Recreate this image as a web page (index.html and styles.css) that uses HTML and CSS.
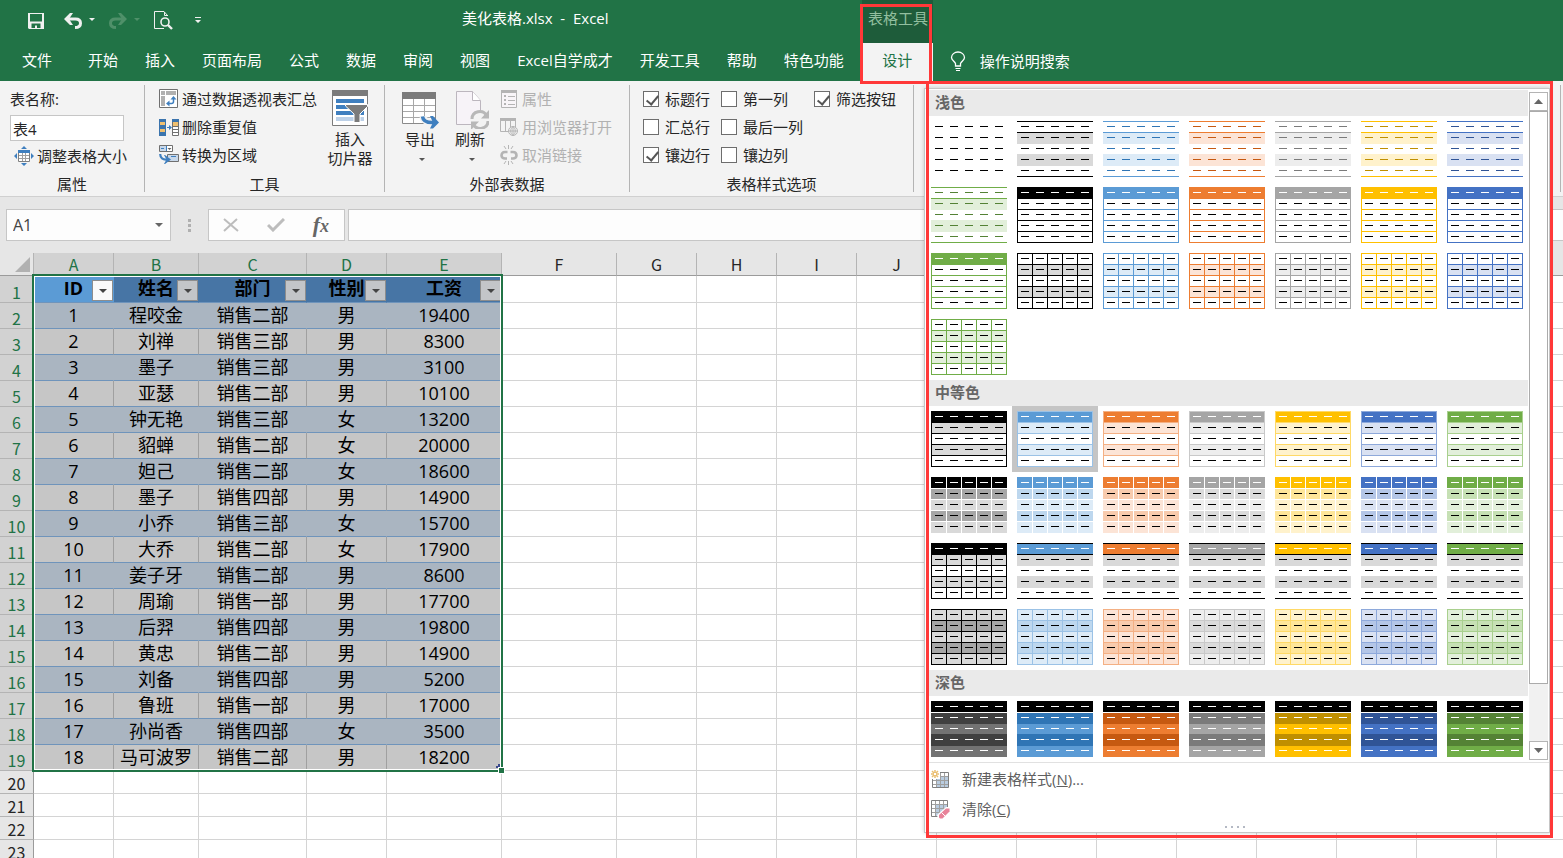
FILE: index.html
```html
<!DOCTYPE html>
<html lang="zh-CN">
<head>
    <meta charset="UTF-8">
    <meta name="viewport" content="width=device-width, initial-scale=1.0">
    <title>美化表格.xlsx - Excel</title>
    <link rel="stylesheet" href="styles.css">
</head>
<body>
    <header class="title-bar">
        <div class="quick-access">
            <button class="qa-btn" aria-label="保存">
                <svg width="16" height="16" viewBox="0 0 16 16"><path fill="#f0f0f0" fill-rule="evenodd" d="M0 0h16v16H1l-1-1zM2 1v7.500h12V1zM3.500 10.500V15H7v-2.500h2V15h3.500v-4.500z"/></svg>
            </button>
            <button class="qa-btn qa-undo" aria-label="撤消">
                <svg width="18" height="16" viewBox="0 0 18 16"><path fill="none" stroke="#f0f0f0" stroke-width="3" d="M3 6h8.500c3 0 5 1.500 5 4.200S14.500 14.500 11 14.500"/><path fill="#f0f0f0" d="M0 6L6 0h3L5 6l4 6H6z"/></svg>
                <svg class="caret" width="6" height="4" viewBox="0 0 6 4"><path fill="#f0f0f0" d="M0 0h6L3 3z"/></svg>
            </button>
            <button class="qa-btn qa-redo" aria-label="恢复" disabled>
                <svg width="18" height="16" viewBox="0 0 18 16"><path fill="none" stroke="#4f9069" stroke-width="3" d="M15 6H6.500c-3 0-5 1.500-5 4.200S3.500 14.500 7 14.500"/><path fill="#4f9069" d="M18 6l-6-6H9l4 6-4 6h3z"/></svg>
                <svg class="caret" width="6" height="4" viewBox="0 0 6 4"><path fill="#4f9069" d="M0 0h6L3 3z"/></svg>
            </button>
            <button class="qa-btn qa-preview" aria-label="打印预览">
                <svg width="19" height="19" viewBox="0 0 19 19"><path fill="none" stroke="#f0f0f0" d="M13.500 5V4.500L10 .500H.500v17H10M10.500 1v3.500H14"/><circle cx="11" cy="11" r="4" fill="none" stroke="#f0f0f0" stroke-width="1.600"/><path stroke="#f0f0f0" stroke-width="2.400" d="M14 14l4 4"/></svg>
            </button>
            <button class="qa-btn" aria-label="自定义快速访问工具栏">
                <svg width="6" height="7" viewBox="0 0 6 7"><path fill="#f0f0f0" d="M0 0h6v1H0zM0 3h6L3 6z"/></svg>
            </button>
        </div>
        <div class="doc-title">美化表格.xlsx&nbsp; - &nbsp;Excel</div>
        <div class="context-title">表格工具</div>
    </header>

    <nav class="tabs">
        <a class="tab tab-file" href="#">文件</a>
        <a class="tab" href="#">开始</a>
        <a class="tab" href="#">插入</a>
        <a class="tab" href="#">页面布局</a>
        <a class="tab" href="#">公式</a>
        <a class="tab" href="#">数据</a>
        <a class="tab" href="#">审阅</a>
        <a class="tab" href="#">视图</a>
        <a class="tab" href="#">Excel自学成才</a>
        <a class="tab" href="#">开发工具</a>
        <a class="tab" href="#">帮助</a>
        <a class="tab" href="#">特色功能</a>
        <a class="tab tab-active" href="#">设计</a>
        <a class="tell-me" href="#">
            <svg width="16" height="21" viewBox="0 0 16 21"><path fill="none" stroke="#fff" stroke-width="1.300" d="M5.500 15v-2.500C4.500 10.500 1.500 9 1.500 6.500 1.500 3.500 4.500 1 8 1s6.500 2.500 6.500 5.500c0 2.500-3 4-4 6V15z"/><path stroke="#fff" stroke-width="1.200" d="M5.500 17.500h5M6 19.500h4"/></svg>
            操作说明搜索
        </a>
    </nav>

    <section class="ribbon">
        <div class="group group-props">
            <div class="group-body">
                <label class="field-label" for="tableName">表名称:</label>
                <input class="name-input" id="tableName" type="text" value="表4">
                <button class="cmd cmd-resize">
                    <svg width="20" height="20" viewBox="0 0 20 20"><path fill="#3f7fbf" d="M10 0l3 3H7zM10 20l-3-3h6zM0 10l3-3v6zM20 10l-3 3V7z"/><path fill="#fff" stroke="#808080" d="M4.500 4.500h11v11h-11z"/><path fill="#3f7fbf" d="M4 4h12v3H4z"/><path stroke="#a0a0a0" d="M5 9.500h10M5 12.500h10M8.500 7v8M11.500 7v8"/></svg>
                    调整表格大小
                </button>
            </div>
            <div class="group-label">属性</div>
        </div>

        <div class="group group-tools">
            <div class="group-body row">
                <div class="cmd-list">
                    <button class="cmd">
                        <svg width="20" height="20" viewBox="0 0 20 20"><path fill="#fff" stroke="#707070" d="M.500.500h18v18H.500z"/><path fill="#b0b0b0" d="M2 2h4v4H2zM7 2h10v4H7zM2 7h4v10H2z"/><path fill="none" stroke="#3f7fbf" stroke-width="1.500" d="M9 14.500h3.500c1.500 0 2-1 2-2V9"/><path fill="#3f7fbf" d="M7 14.500l3.500-3v6zM14.500 7l3 3.500h-6z"/></svg>
                        通过数据透视表汇总
                    </button>
                    <button class="cmd">
                        <svg width="20" height="18" viewBox="0 0 20 18"><path fill="#3b74ad" d="M0 1h7v17H0z"/><path fill="#f0c070" d="M1 4h5v3H1zM1 11h5v3H1z"/><path fill="#3f7fbf" d="M8 9h2V7l3 2.500L10 12v-2H8z"/><path fill="#fff" stroke="#707070" d="M13.500 1.500h6v16h-6z"/><path fill="#3b74ad" d="M13 1h7v3h-7z"/><path fill="#f0c070" d="M14 4h5v4h-5z"/><path stroke="#707070" d="M14 8.500h5M14 11.500h5M14 14.500h5"/></svg>
                        删除重复值
                    </button>
                    <button class="cmd">
                        <svg width="20" height="20" viewBox="0 0 20 20"><path fill="#fff" stroke="#707070" d="M.500.500h13v6H.500z"/><path fill="#c8d8ea" d="M1 1h6v5H1z"/><path stroke="#3f7fbf" d="M2 3.500h3M7.500 1v5"/><path fill="#606060" d="M8.500 3h4l-2 2z"/><path fill="#c8d8ea" stroke="#707070" d="M8.500 9.500h11v7h-11z"/><path stroke="#3f7fbf" d="M12 11.500h5"/><path fill="none" stroke="#3f7fbf" stroke-width="2.200" d="M1.200 9c0 4 2.500 6 7 5.500"/><path fill="#3f7fbf" d="M6 10l6 4.500L6 19h-1l2.500-4.500L5 10z"/></svg>
                        转换为区域
                    </button>
                </div>
                <button class="big-btn slicer-btn">
                    <svg width="36" height="36" viewBox="0 0 36 36"><path fill="#fff" stroke="#7b7b7b" d="M.500.500h35v35H.500z"/><path fill="#7b7b7b" d="M0 0h36v6H0z"/><path fill="#3f7fbf" d="M4 9h28v4H4zM4 15h28v4H4zM4 21h28v4H4z"/><path fill="#bdd1e8" d="M4 27h28v4H4z"/><path fill="#7b7b7b" stroke="#fff" d="M13.500 14.500h22v2l-7.500 7.500v8.500h-6V24l-8.500-8z"/></svg>
                    <span>插入</span>
                    <span>切片器</span>
                </button>
            </div>
            <div class="group-label">工具</div>
        </div>

        <div class="group group-external">
            <div class="group-body row">
                <button class="big-btn">
                    <svg width="38" height="38" viewBox="0 0 38 38"><path fill="#fff" stroke="#8a8a8a" d="M1.500 1.500h33v31h-33z"/><path fill="#7b7b7b" d="M1 1h34v7H1z"/><path stroke="#a8a8a8" d="M2 14.500h32M2 20.500h32M2 26.500h32M12.500 8v24M23.500 8v24"/><path fill="none" stroke="#f3f3f3" stroke-width="7" d="M22 25c0 4 4 7 12 6.500"/><path fill="none" stroke="#3f7fbf" stroke-width="3.500" d="M21.500 25.500c.500 4.500 5 6.500 12 6"/><path fill="#3f7fbf" d="M29 25h3l6 6.500-6 6h-3l3-6z"/></svg>
                    <span>导出</span>
                    <svg class="big-caret" width="6" height="4" viewBox="0 0 6 4"><path fill="#555" d="M0 0h6L3 3z"/></svg>
                </button>
                <button class="big-btn refresh-btn">
                    <svg width="38" height="38" viewBox="0 0 38 38"><path fill="#f7f3f8" stroke="#bcb6be" d="M5.500.500h16l8 9v24h-24z"/><path fill="#fff" stroke="#bcb6be" d="M21.500.500v9h8"/><circle cx="29" cy="29" r="10" fill="#f3f3f3"/><path fill="none" stroke="#b8b8b8" stroke-width="3" d="M21 28c0-8 11-10 14.500-3.500M37 30c0 8-11 10-14.500 3.500"/><path fill="#b8b8b8" d="M38 19v8.500h-8zM20 39v-8.500h8z"/></svg>
                    <span>刷新</span>
                    <svg class="big-caret" width="6" height="4" viewBox="0 0 6 4"><path fill="#555" d="M0 0h6L3 3z"/></svg>
                </button>
                <div class="cmd-list cmd-list-off">
                    <button class="cmd" disabled>
                        <svg width="18" height="18" viewBox="0 0 18 18"><path fill="#f8f5f8" stroke="#b4b4b4" d="M1.500.500h15v17h-15z"/><path fill="#b4b4b4" d="M1 0h16v3H1zM4 5h2v2H4zM4 9h2v2H4zM4 13h2v2H4zM8 6h7v1H8zM8 10h7v1H8zM8 14h7v1H8z"/></svg>
                        属性
                    </button>
                    <button class="cmd" disabled>
                        <svg width="18" height="18" viewBox="0 0 18 18"><path fill="none" stroke="#b4b4b4" d="M9 13.500H.500V.500h15V9M5.500 3v10M10.500 3v6"/><path fill="#b4b4b4" d="M0 0h16v3H0z"/><circle cx="13" cy="13" r="4.500" fill="#f3f3f3" stroke="#b4b4b4"/><path fill="none" stroke="#b4b4b4" d="M8.500 13h9M13 8.500v9M13 8.500c-3 2-3 7 0 9c3-2 3-7 0-9"/></svg>
                        用浏览器打开
                    </button>
                    <button class="cmd" disabled>
                        <svg width="18" height="20" viewBox="0 0 18 20"><path fill="none" stroke="#b4b4b4" stroke-width="2.600" d="M7.500 7H5C2.500 7 1.500 8.500 1.500 10.500S3 13.500 5 13.500h2M10.500 7H13c2.500 0 3.500 1.500 3.500 3.500S15 13.500 13 13.500h-2"/><path stroke="#b4b4b4" d="M8.500 0v4M4 1l2 3M13 1l-2 3M8.500 16v4M4 19l2-3M13 19l-2-3"/></svg>
                        取消链接
                    </button>
                </div>
            </div>
            <div class="group-label">外部表数据</div>
        </div>

        <div class="group group-options">
            <div class="group-body option-grid">
                <label class="check"><input type="checkbox" checked>标题行</label>
                <label class="check"><input type="checkbox">第一列</label>
                <label class="check"><input type="checkbox" checked>筛选按钮</label>
                <label class="check"><input type="checkbox">汇总行</label>
                <label class="check check-wide"><input type="checkbox">最后一列</label>
                <label class="check"><input type="checkbox" checked>镶边行</label>
                <label class="check"><input type="checkbox">镶边列</label>
            </div>
            <div class="group-label">表格样式选项</div>
        </div>
        <div class="group group-styles"></div>
    </section>

    <section class="formula-bar">
        <div class="name-box">
            <input type="text" value="A1" aria-label="名称框">
            <svg width="8" height="5" viewBox="0 0 8 5"><path fill="#666" d="M0 0h8L4 4z"/></svg>
        </div>
        <div class="grip"><i></i><i></i><i></i></div>
        <div class="formula-tools">
            <button aria-label="取消"><svg width="16" height="14" viewBox="0 0 16 14"><path stroke="#bdbdbd" stroke-width="2" d="M1 1l14 12M14 1L1 13"/></svg></button>
            <button aria-label="输入"><svg width="18" height="14" viewBox="0 0 18 14"><path fill="none" stroke="#bdbdbd" stroke-width="3" d="M1 7l5 5L17 1"/></svg></button>
            <button class="fx" aria-label="插入函数"><span class="fx-f">f</span><span class="fx-x">x</span></button>
        </div>
        <input class="formula-input" type="text" aria-label="编辑栏">
    </section>

    <main class="sheet">
        <table class="grid" id="grid"></table>
        <div class="selection"><i class="table-corner"></i><i class="fill-handle"></i></div>
    </main>

    <!-- table style gallery -->
    <div class="gallery">
        <div class="gallery-view">
            <div class="gallery-list">
                <h3>浅色</h3>
                <div class="thumbs" id="light"></div>
                <h3>中等色</h3>
                <div class="thumbs" id="medium"></div>
                <h3>深色</h3>
                <div class="thumbs" id="dark"></div>
            </div>
            <div class="scrollbar">
                <button aria-label="向上"><svg width="9" height="5" viewBox="0 0 9 5"><path fill="#666" d="M0 5h9L4.500 0z"/></svg></button>
                <div class="scroll-thumb"></div>
                <div class="scroll-track"></div>
                <button aria-label="向下"><svg width="9" height="5" viewBox="0 0 9 5"><path fill="#666" d="M0 0h9L4.500 5z"/></svg></button>
            </div>
        </div>
        <div class="gallery-menu">
            <button>
                <svg width="19" height="19" viewBox="0 0 19 19"><path fill="#fff" stroke="#808080" d="M1.500 2.500h16v15h-16z"/><path fill="#b9cce0" d="M6 6h11v11H6z"/><path stroke="#a0a0a0" d="M2 6.500h15M2 10.500h15M2 14.500h15M5.500 3v14M9.500 3v14M13.500 3v14"/><path fill="#fff" d="M0 0h9v9H0z"/><path stroke="#eabf72" stroke-width="1.500" d="M4 0v3M4 5v3M0 4h3M5 4h3M1 1l2 2M5 5l2 2M7 1L5 3M3 5L1 7"/></svg>
                <span>新建表格样式(<u>N</u>)...</span>
            </button>
            <button>
                <svg width="19" height="19" viewBox="0 0 19 19"><path fill="#fff" stroke="#808080" d="M.500.500h16v16H.500z"/><path fill="#b9cce0" d="M5 5h11v11H5z"/><path stroke="#a0a0a0" d="M1 4.500h15M1 8.500h15M1 12.500h15M4.500 1v15M8.500 1v15M12.500 1v15"/><path fill="#fff" d="M6 15l9-8h4v12H7z"/><path fill="#e8839a" d="M8 15l7-6.500h3.500v3L11.500 18.500H9L8 17.500z"/><path stroke="#fff" d="M10.500 12.500l4 4"/></svg>
                <span>清除(<u>C</u>)</span>
            </button>
            <div class="resize-dots"><i></i><i></i><i></i><i></i></div>
        </div>
    </div>

    <div class="callout callout-tab"></div>
    <div class="callout callout-gallery"></div>

    <script src="script.js"></script>
</body>
</html>
```
FILE: styles.css
```css
* {
    box-sizing: border-box;
}

body {
    margin: 0;
    height: 100vh;
    display: flex;
    flex-direction: column;
    position: relative;
    overflow: hidden;
    background: #e6e6e6;
    color: #262626;
    font-family: "Open Sans", "Noto Sans CJK SC", sans-serif;
    font-size: 15px;
    line-height: 20px;
}

button, input {
    font: inherit;
    color: inherit;
}

button {
    border: none;
    background: none;
    padding: 0;
}

a {
    color: inherit;
    text-decoration: none;
}

svg {
    display: block;
    flex: none;
}

/* title bar */
.title-bar {
    display: flex;
    height: 43px;
    flex: none;
    background: #217346;
    color: #fff;
}

.quick-access {
    display: flex;
    align-items: center;
    width: 462px;
    padding-left: 28px;
    padding-bottom: 2px;
}

.qa-btn {
    display: flex;
    align-items: center;
    gap: 7px;
    margin-right: 20px;
}

.qa-undo, .qa-redo {
    margin-right: 14px;
}

.caret {
    margin-bottom: 2px;
}

.qa-preview {
    margin: 0 22px 0 0;
}

.doc-title {
    width: 400px;
    padding-top: 8px;
}

.context-title {
    width: 71px;
    padding-top: 8px;
    padding-left: 6px;
    background: #1e5c3a;
    color: #92bf9f;
    white-space: nowrap;
}

/* tabs */
.tabs {
    display: flex;
    height: 38px;
    flex: none;
    background: #217346;
    color: #fff;
    line-height: 34px;
    white-space: nowrap;
}

.tab {
    padding: 0 13px 0 14px;
}

.tab-file {
    padding: 0 22px;
}

.tab-active {
    width: 71px;
    margin-left: 5px;
    padding: 0;
    text-align: center;
    background: #f3f3f3;
    color: #217346;
}

.tell-me {
    display: flex;
    align-items: center;
    gap: 14px;
    margin-left: 17px;
    padding-bottom: 2px;
}

/* ribbon */
.ribbon {
    display: flex;
    height: 116px;
    flex: none;
    padding: 4px 2px 4px 0;
    background: #f3f3f3;
    border-bottom: 1px solid #d0d0d0;
    white-space: nowrap;
}

.group {
    display: flex;
    flex-direction: column;
    flex: none;
    border-right: 1px solid #b4b4b4;
}

.group-body {
    height: 88px;
    flex: none;
}

.group-label {
    padding-top: 2px;
    line-height: 19px;
    text-align: center;
}

.row {
    display: flex;
}

.group-props {
    width: 145px;
}

.group-props .group-body {
    padding: 4px 10px 0;
}

.group-tools {
    width: 240px;
}

.group-external {
    width: 245px;
}

.group-options {
    width: 284px;
}

.group-styles {
    flex: 1;
}

.field-label {
    display: block;
    height: 26px;
}

.name-input {
    display: block;
    width: 114px;
    height: 26px;
    padding: 0 2px;
    border: 1px solid #c6c6c6;
    background: #fff;
}

.cmd {
    display: flex;
    align-items: center;
    gap: 3px;
    height: 28px;
}

.cmd-resize {
    height: 30px;
    margin-left: 4px;
}

.cmd-list {
    padding-left: 14px;
}

.cmd-list-off {
    padding-left: 5px;
    color: #b1b1b1;
}

.cmd-list-off .cmd {
    gap: 4px;
}

.big-btn {
    display: flex;
    flex-direction: column;
    align-items: center;
    width: 50px;
    padding-top: 6px;
}

.big-btn span {
    line-height: 19px;
}

.big-btn svg + span {
    padding-top: 1px;
}

.big-caret {
    margin: 9px 0 0 4px;
}

.slicer-btn {
    margin-left: 8px;
    padding-top: 5px;
}

.slicer-btn svg + span {
    padding-top: 4px;
}

.group-external .row {
    padding-left: 10px;
}

.option-grid {
    display: grid;
    grid-template-columns: 78px 93px 1fr;
    grid-template-rows: repeat(3, 28px);
    padding-left: 13px;
}

.check {
    display: flex;
    align-items: center;
    gap: 6px;
}

.check-wide {
    grid-column: 2 / 4;
}

.check input {
    appearance: none;
    position: relative;
    flex: none;
    width: 16px;
    height: 16px;
    margin: 0;
    border: 1px solid #6d6d6d;
    background: #fff;
}

.check input:checked::before {
    content: "";
    position: absolute;
    left: 5px;
    top: 1px;
    width: 5px;
    height: 10px;
    border: solid #555;
    border-width: 0 2px 2px 0;
    transform: rotate(40deg);
}

/* formula bar */
.formula-bar {
    display: flex;
    flex: none;
    height: 56px;
    padding: 12px 0 12px 6px;
}

.name-box {
    display: flex;
    align-items: center;
    width: 165px;
    padding: 0 7px 0 6px;
    border: 1px solid #c6c6c6;
    background: #fdfdfd;
}

.name-box input {
    flex: 1;
    min-width: 0;
    padding: 0;
    border: none;
    background: none;
    color: #444;
    font-size: 16px;
}

.grip {
    display: flex;
    flex-direction: column;
    justify-content: center;
    gap: 2px;
    width: 37px;
    padding-left: 17px;
}

.grip i {
    width: 3px;
    height: 3px;
    background: #b0b0b0;
}

.formula-tools {
    display: flex;
    align-items: center;
    justify-content: space-between;
    width: 137px;
    margin-right: 3px;
    padding: 0 15px 0 14px;
    border: 1px solid #c6c6c6;
    background: #fdfdfd;
}

.fx {
    color: #666;
    font-family: "Liberation Serif", serif;
    font-style: italic;
    font-weight: bold;
    font-size: 22px;
}

.fx-x {
    font-size: 18px;
}

.formula-input {
    flex: 1;
    border: 1px solid #c6c6c6;
    border-right: none;
    background: #fdfdfd;
}

/* sheet */
.sheet {
    position: relative;
    flex: 1;
    overflow: hidden;
    background: #fff;
}

.grid {
    width: 1577px;
    table-layout: fixed;
    border-collapse: separate;
    border-spacing: 0;
    text-align: center;
    white-space: nowrap;
}

.grid th, .grid td {
    height: 23px;
    padding: 0;
    border: solid #d4d4d4;
    border-width: 0 1px 1px 0;
}

.w-head { width: 34px; }
.w-80 { width: 80px; }
.w-85 { width: 85px; }
.w-108 { width: 108px; }
.w-115 { width: 115px; }

.grid .col-head, .grid .row-head, .grid .corner {
    background: #e6e6e6;
    border-color: #b4b4b4;
    font-family: "Noto Sans CJK SC", sans-serif;
    font-size: 16px;
    font-weight: 400;
}

.grid .col-head, .grid .corner {
    border-bottom-color: #9b9b9b;
}

.grid .row-head {
    border-right-color: #9b9b9b;
    vertical-align: bottom;
}

.grid .picked {
    background: #d2d2d2;
    color: #217346;
}

.corner svg {
    margin: 1px 0 0 15px;
}

.grid .data-row td, .grid .data-row th {
    height: 26px;
}

.grid .head-row td, .grid .head-row th {
    height: 27px;
}

.grid .cell {
    padding-bottom: 2px;
    color: #000;
    font-size: 18px;
    background: #c6c6c6;
    border-color: #a0a0a0;
    border-bottom-color: #6f94bb;
}

.grid .banded .cell {
    background: #aab5c1;
    border-right-color: #aab5c1;
}

.grid .head-row .cell {
    position: relative;
    background: #4775a5;
    border-right-color: #4775a5;
    font-weight: 700;
}

.grid .head-row .active {
    background: #5b9bd5;
    border-right-color: #5b9bd5;
}

.filter-btn {
    position: absolute;
    right: 0;
    bottom: 1px;
    display: flex;
    align-items: center;
    justify-content: center;
    width: 21px;
    height: 21px;
    border: 1px solid #8d8d8d;
    background: #c3c5c8;
}

.active .filter-btn {
    background: #fafafa;
}

.selection {
    position: absolute;
    left: 32px;
    top: 21px;
    width: 471px;
    height: 498px;
    border: 2px solid #217346;
    box-shadow: inset 0 0 0 1px #fff;
    pointer-events: none;
}

.fill-handle {
    position: absolute;
    right: -4px;
    bottom: -4px;
    width: 7px;
    height: 7px;
    border: 1px solid #fff;
    background: #217346;
}

.table-corner {
    position: absolute;
    right: 1px;
    bottom: 2px;
    width: 4px;
    height: 4px;
    border: solid #3b4a8c;
    border-width: 0 2px 2px 0;
}

/* gallery */
.gallery {
    position: absolute;
    left: 924px;
    right: 13px;
    top: 88px;
    padding: 1px 0 0 1px;
    border: 1px solid #c6c6c6;
    background: #fff;
    box-shadow: 0 0 4px rgba(0, 0, 0, 0.2);
    color: #5f5f5f;
}

.gallery-view {
    display: flex;
    border-bottom: 1px solid #e1e1e1;
}

.gallery h3 {
    height: 26px;
    margin: 0;
    padding-left: 9px;
    background: #eaeaea;
    color: #666;
    font-size: 15px;
    font-weight: 700;
    line-height: 24px;
}

.thumbs {
    display: grid;
    grid-template-columns: repeat(7, 86px);
}

.thumb {
    padding: 5px;
}

.thumb-selected {
    background: #c5c5c5;
}

.scrollbar {
    display: flex;
    flex-direction: column;
    width: 19px;
    margin: 2px 0 2px 1px;
    background: #f1f1f1;
}

.scrollbar button {
    display: flex;
    align-items: center;
    justify-content: center;
    height: 19px;
    border: 1px solid #b4b4b4;
    background: #fff;
}

.scroll-thumb {
    flex: 573;
    border: 1px solid #ababab;
    background: #fff;
}

.scroll-track {
    flex: 57;
}

.gallery-menu {
    padding: 1px 0 4px 5px;
}

.gallery-menu button {
    display: flex;
    align-items: center;
    gap: 12px;
    height: 30px;
}

.resize-dots {
    display: flex;
    justify-content: center;
    gap: 4px;
    padding-top: 2px;
    margin-right: 10px;
}

.resize-dots i {
    width: 2px;
    height: 2px;
    background: #b4b9c4;
}

/* red marker frames */
.callout {
    position: absolute;
    border: 3px solid #ff3838;
    pointer-events: none;
}

.callout-tab {
    left: 860px;
    top: 4px;
    width: 72px;
    height: 80px;
}

.callout-gallery {
    left: 926px;
    right: 10px;
    top: 81px;
    height: 757px;
}
```
FILE: script.js
```js
const people = [
    [1, '程咬金', '销售二部', '男', 19400],
    [2, '刘禅', '销售三部', '男', 8300],
    [3, '墨子', '销售三部', '男', 3100],
    [4, '亚瑟', '销售二部', '男', 10100],
    [5, '钟无艳', '销售三部', '女', 13200],
    [6, '貂蝉', '销售二部', '女', 20000],
    [7, '妲己', '销售二部', '女', 18600],
    [8, '墨子', '销售四部', '男', 14900],
    [9, '小乔', '销售三部', '女', 15700],
    [10, '大乔', '销售二部', '女', 17900],
    [11, '姜子牙', '销售二部', '男', 8600],
    [12, '周瑜', '销售一部', '男', 17700],
    [13, '后羿', '销售四部', '男', 19800],
    [14, '黄忠', '销售二部', '男', 14900],
    [15, '刘备', '销售四部', '男', 5200],
    [16, '鲁班', '销售一部', '男', 17000],
    [17, '孙尚香', '销售四部', '女', 3500],
    [18, '马可波罗', '销售二部', '男', 18200]
];
const headers = ['ID', '姓名', '部门', '性别', '工资'];
const letters = ['A', 'B', 'C', 'D', 'E', 'F', 'G', 'H', 'I', 'J', '', '', '', '', '', '', '', ''];
const widths = ['w-80', 'w-85', 'w-108', 'w-80', 'w-115', 'w-115'];

function buildGrid() {
    const arrow = '<svg width="8" height="4" viewBox="0 0 8 4"><path fill="#444" d="M0 0h8L4 4z"/></svg>';
    const blanks = '<td></td>'.repeat(letters.length - headers.length);

    let html = '<colgroup><col class="w-head">';
    letters.forEach((l, i) => html += `<col class="${widths[i] || 'w-80'}">`);
    html += '</colgroup><thead><tr><td class="corner"><svg width="15" height="15" viewBox="0 0 15 15"><path fill="#b1b1b1" d="M15 0v15H0z"/></svg></td>';
    letters.forEach((l, i) => html += `<th class="col-head${i < 5 ? ' picked' : ''}">${l}</th>`);
    html += '</tr></thead><tbody><tr class="head-row"><th class="row-head picked">1</th>';
    headers.forEach((h, i) => {
        html += `<td class="cell${i === 0 ? ' active' : ''}">${h}<button class="filter-btn" aria-label="筛选">${arrow}</button></td>`;
    });
    html += blanks + '</tr>';

    people.forEach((p, i) => {
        html += `<tr class="data-row${i % 2 === 0 ? ' banded' : ''}"><th class="row-head picked">${i + 2}</th>`;
        p.forEach(v => html += `<td class="cell">${v}</td>`);
        html += blanks + '</tr>';
    });

    for (let n = 20; n <= 23; n++) {
        html += `<tr><th class="row-head">${n}</th>${'<td></td>'.repeat(letters.length)}</tr>`;
    }
    document.getElementById('grid').innerHTML = html + '</tbody>';
}

// main, dark, band, strong band, border, dark rows
const black = { main: '#000', deep: '#000', band: '#d9d9d9', strong: '#a6a6a6', edge: '#000', dark1: '#404040', dark2: '#737373' };
const blue = { main: '#5b9bd5', deep: '#2f75b5', band: '#ddebf7', strong: '#bdd7ee', edge: '#9bc2e6' };
const orange = { main: '#ed7d31', deep: '#c65911', band: '#fce4d6', strong: '#f8cbad', edge: '#f4b084' };
const gray = { main: '#a5a5a5', deep: '#7b7b7b', band: '#ededed', strong: '#dbdbdb', edge: '#c9c9c9' };
const gold = { main: '#ffc000', deep: '#bf8f00', band: '#fff2cc', strong: '#ffe699', edge: '#ffd966' };
const navy = { main: '#4472c4', deep: '#305496', band: '#d9e1f2', strong: '#b4c6e7', edge: '#8ea9db' };
const green = { main: '#70ad47', deep: '#548235', band: '#e2efda', strong: '#c6e0b4', edge: '#a9d08e' };
const colors = [black, blue, orange, gray, gold, navy, green];

function rect(x, y, w, h, fill) {
    return `<rect x="${x}" y="${y}" width="${w}" height="${h}" fill="${fill}"/>`;
}

function hLines(ys, color) {
    return ys.map(y => rect(0, y, 76, 1, color)).join('');
}

function vLines(xs, color) {
    return xs.map(x => rect(x, 0, 1, 56, color)).join('');
}

function bands(color) {
    return rect(0, 12, 76, 11, color) + rect(0, 33, 76, 12, color);
}

const rowsY = [0, 11, 22, 33, 44, 55];
const colsX = [0, 15, 30, 45, 60, 75];

function thumb(body, headDash, dash, selected) {
    let s = body;
    for (let r = 0; r < 5; r++) {
        for (let c = 0; c < 5; c++) {
            s += rect(4 + c * 15, 5 + r * 11, 8, 1, r === 0 ? headDash : dash);
        }
    }
    return `<button class="thumb${selected ? ' thumb-selected' : ''}" aria-label="表样式"><svg width="76" height="56" viewBox="0 0 76 56" shape-rendering="crispEdges">${rect(0, 0, 76, 56, '#fff')}${s}</svg></button>`;
}

function buildGallery() {
    let light = thumb('', '#000', '#000');
    colors.forEach(c => light += thumb(bands(c.band) + hLines([0, 11, 55], c.main), c.deep, c.deep));
    colors.forEach(c => light += thumb(rect(0, 0, 76, 12, c.main) + hLines(rowsY, c.main) + vLines([0, 75], c.main), '#fff', '#000'));
    colors.forEach(c => light += thumb(bands(c.band) + hLines(rowsY, c.main) + vLines(colsX, c.main), '#000', '#000'));
    document.getElementById('light').innerHTML = light;

    let medium = '';
    colors.forEach(c => medium += thumb(rect(0, 0, 76, 12, c.main) + bands(c.band) + hLines(rowsY, c.edge) + vLines([0, 75], c.edge), '#fff', '#000', c === blue));
    colors.forEach(c => medium += thumb(rect(0, 0, 76, 56, c.band) + rect(0, 0, 76, 11, c.main) + bands(c.strong) + hLines([11, 22, 33, 44], '#fff') + vLines([15, 30, 45, 60], '#fff'), '#fff', '#000'));
    colors.forEach(c => {
        let body = rect(0, 0, 76, 12, c.main) + bands('#d9d9d9');
        body += c === black ? hLines(rowsY, '#000') + vLines(colsX, '#000') : hLines([0, 11, 55], '#000');
        medium += thumb(body, '#fff', '#000');
    });
    colors.forEach(c => medium += thumb(rect(0, 0, 76, 56, c.band) + bands(c.strong) + hLines(rowsY, c.edge) + vLines(colsX, c.edge), '#000', '#000'));
    document.getElementById('medium').innerHTML = medium;

    let dark = '';
    colors.forEach(c => dark += thumb(rect(0, 0, 76, 56, c.dark2 || c.main) + rect(0, 0, 76, 11, '#000') + rect(0, 11, 76, 1, '#fff') + bands(c.dark1 || c.deep), '#fff', '#fff'));
    document.getElementById('dark').innerHTML = dark;
}

buildGrid();
buildGallery();
```
